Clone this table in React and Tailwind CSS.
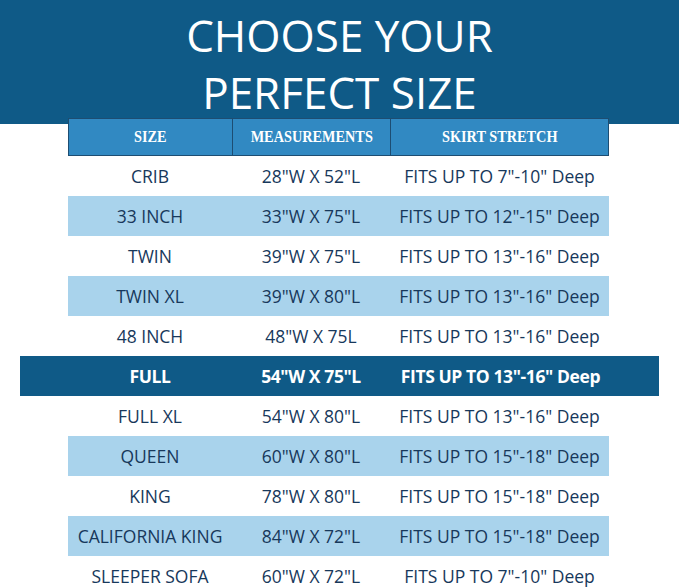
import React from 'react';

const rows = [
  ['CRIB', '28"W X 52"L', 'FITS UP TO 7"-10" Deep'],
  ['33 INCH', '33"W X 75"L', 'FITS UP TO 12"-15" Deep'],
  ['TWIN', '39"W X 75"L', 'FITS UP TO 13"-16" Deep'],
  ['TWIN XL', '39"W X 80"L', 'FITS UP TO 13"-16" Deep'],
  ['48 INCH', '48"W X 75L', 'FITS UP TO 13"-16" Deep'],
  ['FULL', '54"W X 75"L', 'FITS UP TO 13"-16" Deep'],
  ['FULL XL', '54"W X 80"L', 'FITS UP TO 13"-16" Deep'],
  ['QUEEN', '60"W X 80"L', 'FITS UP TO 15"-18" Deep'],
  ['KING', '78"W X 80"L', 'FITS UP TO 15"-18" Deep'],
  ['CALIFORNIA KING', '84"W X 72"L', 'FITS UP TO 15"-18" Deep'],
  ['SLEEPER SOFA', '60"W X 72"L', 'FITS UP TO 7"-10" Deep'],
];

const App = () => {
  return (
    <div className="w-[679px] h-[588px] overflow-hidden bg-white relative">
      {/* Title band */}
      <div className="h-[124px] bg-[#0f5a87] flex flex-col items-center pt-[7px]">
        <h1 className="text-white text-[44px] leading-[57px] font-normal text-center [font-family:'Open_Sans',sans-serif]">
          CHOOSE YOUR
          <br />
          PERFECT SIZE
        </h1>
      </div>

      <div className="-mt-[6px] flex flex-col">
        {/* Header */}
        <div className="mx-[68px] w-[541px] h-[38px] flex bg-[#3189c2] border border-[#1d4d72] text-white font-bold text-[17px] [font-family:'Liberation_Serif',serif]">
          <div className="w-[164px] flex items-center justify-center border-r border-[#1d4d72]">
            <span className="inline-block scale-x-[0.84]">SIZE</span>
          </div>
          <div className="w-[158px] flex items-center justify-center border-r border-[#1d4d72]">
            <span className="inline-block scale-x-[0.84]">MEASUREMENTS</span>
          </div>
          <div className="flex-1 flex items-center justify-center">
            <span className="inline-block scale-x-[0.84]">SKIRT STRETCH</span>
          </div>
        </div>

        {rows.map((r, i) => {
          const full = r[0] === 'FULL';
          const alt = i % 2 === 1;
          return (
            <div
              key={r[0]}
              className={`h-[40px] flex items-center text-[17.5px] [font-family:'Open_Sans',sans-serif] ${
                full
                  ? 'mx-[20px] w-[639px] bg-[#0f5a87] text-white font-bold tracking-[-0.4px] px-[48px]'
                  : alt
                  ? 'mx-[68px] w-[541px] bg-[#a9d3ec] text-[#17385b] font-medium'
                  : 'mx-[68px] w-[541px] bg-white text-[#17385b] font-medium'
              }`}
            >
              <div className="w-[164px] text-center">{r[0]}</div>
              <div className="w-[158px] text-center">{r[1]}</div>
              <div className="flex-1 text-center">{r[2]}</div>
            </div>
          );
        })}
      </div>
    </div>
  );
};

export default App;
